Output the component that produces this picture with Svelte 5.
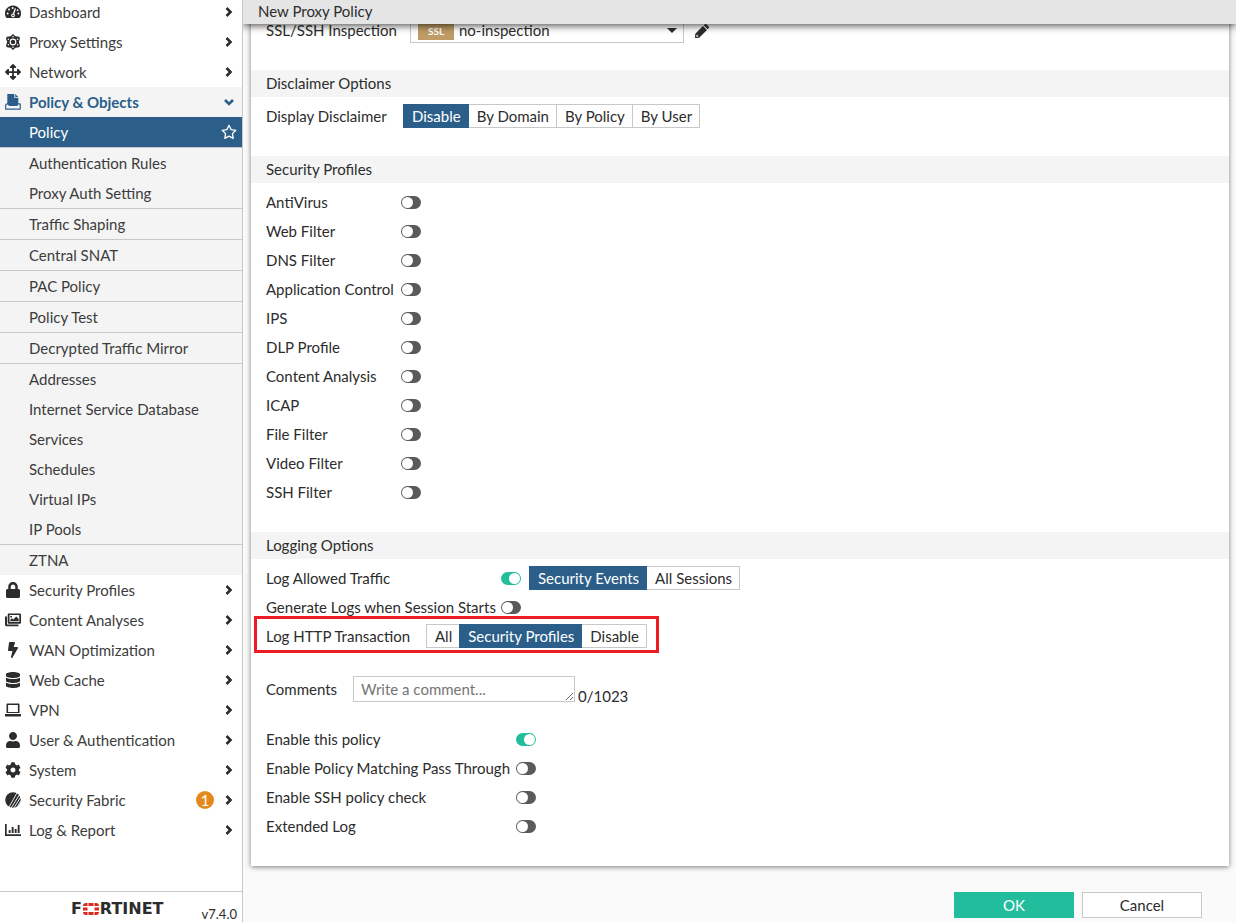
<script>
  const icons = {
    dashboard: {
      box: '0 0 16 16',
      body: '<path fill-rule="evenodd" d="M8 1.5a8 8 0 0 0-7.2 11.6c.3.6.7.9 1.3.9h11.8c.6 0 1-.3 1.3-.9A8 8 0 0 0 8 1.5z"/><g fill="#fff"><circle cx="2.6" cy="9.6" r="1"/><circle cx="4" cy="5.6" r="1"/><circle cx="7.6" cy="3.9" r="1"/><circle cx="13.4" cy="9.6" r="1"/><circle cx="12.6" cy="6.2" r=".9"/><path d="M9.8 4.2l1.2.4-1.8 5.3a1.9 1.9 0 1 1-1.3-.4z"/></g><circle cx="8" cy="11.4" r=".8"/>'
    },
    atom: {
      box: '0 0 16 16',
      body: '<path d="M8 0l2.400 2.300 3.800.5.800 1.600L13.800 8l1.200 3.600-.8 1.600-3.800.5L8 16l-2.400-2.300-3.800-.5-.8-1.600L2.200 8 1 4.400l.8-1.600 3.800-.5z"/><circle cx="8" cy="8" r="2.800" fill="none" stroke="#fff" stroke-width="1.200"/><g fill="#fff"><circle cx="8" cy="2.700" r=".8"/><circle cx="8" cy="13.300" r=".8"/><circle cx="3.400" cy="5.300" r=".8"/><circle cx="12.600" cy="5.300" r=".8"/><circle cx="3.400" cy="10.700" r=".8"/><circle cx="12.600" cy="10.700" r=".8"/></g>'
    },
    network: {
      box: '0 0 512 512',
      body: '<path d="M352.201 425.775l-79.196 79.196c-9.373 9.373-24.568 9.373-33.941 0l-79.196-79.196c-15.119-15.119-4.411-40.971 16.971-40.97h51.162L228 284H127.196v51.162c0 21.382-25.851 32.09-40.971 16.971L7.029 272.937c-9.373-9.373-9.373-24.569 0-33.941L86.225 159.8c15.119-15.119 40.971-4.411 40.971 16.971V228H228V127.196h-51.23c-21.382 0-32.09-25.851-16.971-40.971l79.196-79.196c9.373-9.373 24.568-9.373 33.941 0l79.196 79.196c15.119 15.119 4.411 40.971-16.971 40.971h-51.162V228h100.804v-51.162c0-21.382 25.851-32.09 40.97-16.971l79.196 79.196c9.373 9.373 9.373 24.569 0 33.941L425.773 352.2c-15.119 15.119-40.971 4.411-40.97-16.971V284H284v100.804h51.23c21.382 0 32.09 25.851 16.971 40.971z"/>'
    },
    policy: {
      box: '0 0 16 16',
      body: '<path d="M2.300 0h7v3.800h4v6l-1.400 1.500H4L2.300 9.500zM10.200 0l3.100 3h-3.100z"/><path fill="none" stroke="currentColor" stroke-width="1.200" stroke-linejoin="round" d="M2.600 9.600L.7 11v4.200h14.500V9.800h-2l-1.300 1.600H4.400z"/>'
    },
    lock: {
      box: '0 0 448 512',
      body: '<path d="M400 224h-24v-72C376 68.2 307.8 0 224 0S72 68.2 72 152v72H48c-26.5 0-48 21.5-48 48v192c0 26.5 21.5 48 48 48h352c26.5 0 48-21.5 48-48V272c0-26.5-21.5-48-48-48zm-104 0H152v-72c0-39.7 32.3-72 72-72s72 32.3 72 72v72z"/>'
    },
    images: {
      box: '0 0 16 16',
      body: '<path d="M0 4.5h2v8h11.5v1.7H1.4C.5 14.200 0 13.600 0 12.800z"/><path fill-rule="evenodd" d="M4 1.500h10.700c.8 0 1.300.5 1.300 1.300v7.600c0 .8-.5 1.300-1.300 1.300H4c-.8 0-1.300-.5-1.300-1.300V2.800C2.700 2 3.200 1.500 4 1.500zm.5 1.600v6.900h9.800V3.100zM5.300 9.200V7.700l1.600-1.500 1.300 1.200 3-3 2.500 2.500v2.300zM5.300 3.900h1.700v1.500H5.300z"/>'
    },
    bolt: {
      box: '0 0 320 512',
      body: '<path d="M296 160H180.600l42.600-129.800C227.200 15 215.700 0 200 0H56C44 0 33.800 8.900 32.200 20.800l-32 240C-1.700 275.200 9.500 288 24 288h118.700L96.600 482.500c-3.600 15.200 8 29.500 23.300 29.500 8.400 0 16.400-4.400 20.800-12l176-304c9.300-15.900-2.200-36-20.700-36z"/>'
    },
    database: {
      box: '0 0 448 512',
      body: '<path d="M448 73.143v45.714C448 159.143 347.667 192 224 192S0 159.143 0 118.857V73.143C0 32.857 100.333 0 224 0s224 32.857 224 73.143zM448 176v102.857C448 319.143 347.667 352 224 352S0 319.143 0 278.857V176c48.125 33.143 136.208 48.572 224 48.572S399.874 209.143 448 176zm0 160v102.857C448 479.143 347.667 512 224 512S0 479.143 0 438.857V336c48.125 33.143 136.208 48.572 224 48.572S399.874 369.143 448 336z"/>'
    },
    laptop: {
      box: '0 0 16 16',
      body: '<path fill-rule="evenodd" d="M2.500 1.500h11c.6 0 1 .4 1 1V11h-13V2.500c0-.6.4-1 1-1zM3.100 3.100v6.800h9.800V3.100zM0 12h16v1.500c0 .6-.4 1-1 1H1c-.6 0-1-.4-1-1z"/>'
    },
    user: {
      box: '0 0 448 512',
      body: '<path d="M224 256c70.700 0 128-57.300 128-128S294.700 0 224 0 96 57.300 96 128s57.300 128 128 128zm89.600 32h-16.700c-22.200 10.200-46.900 16-72.900 16s-50.600-5.800-72.900-16h-16.700C60.200 288 0 348.200 0 422.400V464c0 26.500 21.500 48 48 48h352c26.500 0 48-21.500 48-48v-41.600c0-74.200-60.200-134.400-134.400-134.400z"/>'
    },
    cog: {
      box: '0 0 512 512',
      body: '<path d="M487.400 315.700l-42.600-24.600c4.300-23.200 4.300-47 0-70.200l42.600-24.600c4.900-2.800 7.100-8.600 5.500-14-11.100-35.600-30-67.800-54.700-94.600-3.800-4.100-10-5.100-14.800-2.300L380.800 110c-17.900-15.400-38.500-27.300-60.800-35.100V25.800c0-5.600-3.900-10.500-9.400-11.700-36.700-8.200-74.300-7.800-109.200 0-5.500 1.200-9.400 6.100-9.400 11.700V75c-22.200 7.900-42.800 19.800-60.800 35.100L88.700 85.500c-4.900-2.800-11-1.900-14.800 2.300-24.700 26.700-43.600 58.900-54.700 94.600-1.700 5.400.6 11.200 5.500 14L67.300 221c-4.300 23.200-4.300 47 0 70.200l-42.600 24.600c-4.900 2.800-7.100 8.600-5.500 14 11.100 35.600 30 67.800 54.700 94.600 3.800 4.100 10 5.100 14.800 2.300l42.600-24.600c17.900 15.400 38.500 27.300 60.800 35.100v49.200c0 5.600 3.900 10.500 9.400 11.700 36.700 8.200 74.300 7.800 109.200 0 5.500-1.200 9.400-6.100 9.400-11.700v-49.200c22.200-7.900 42.800-19.800 60.800-35.100l42.600 24.600c4.900 2.800 11 1.900 14.800-2.300 24.700-26.700 43.600-58.900 54.700-94.600 1.500-5.500-.7-11.300-5.600-14.100zM256 336c-44.100 0-80-35.900-80-80s35.900-80 80-80 80 35.900 80 80-35.900 80-80 80z"/>'
    },
    fabric: {
      box: '0 0 16 16',
      body: '<circle cx="8" cy="8" r="7.800"/><g stroke="#fff" stroke-width=".9"><path d="M3.500 16L12.500 0M6.200 16L14.800 2M8.900 16L16 4.500M11.600 16L16 8.500"/></g>'
    },
    chart: {
      box: '0 0 16 16',
      body: '<path d="M0 2h1.700v10.300H16V14H0zM3.700 8h1.900v3H3.700zM6.700 5h1.900v6H6.700zM9.700 7h1.900v4H9.700zM12.700 3h1.900v8h-1.900z"/>'
    }
  };

  const topMenu = [
    { label: 'Dashboard', icon: 'dashboard' },
    { label: 'Proxy Settings', icon: 'atom' },
    { label: 'Network', icon: 'network' }
  ];

  // Each group is closed off by a divider line
  const policyGroups = [
    ['Authentication Rules', 'Proxy Auth Setting'],
    ['Traffic Shaping'],
    ['Central SNAT'],
    ['PAC Policy'],
    ['Policy Test'],
    ['Decrypted Traffic Mirror'],
    ['Addresses', 'Internet Service Database', 'Services', 'Schedules', 'Virtual IPs', 'IP Pools'],
    ['ZTNA']
  ];

  const bottomMenu = [
    { label: 'Security Profiles', icon: 'lock' },
    { label: 'Content Analyses', icon: 'images' },
    { label: 'WAN Optimization', icon: 'bolt' },
    { label: 'Web Cache', icon: 'database' },
    { label: 'VPN', icon: 'laptop' },
    { label: 'User & Authentication', icon: 'user' },
    { label: 'System', icon: 'cog' },
    { label: 'Security Fabric', icon: 'fabric', badge: 1 },
    { label: 'Log & Report', icon: 'chart' }
  ];

  let inspection = $state('no-inspection');
  let disclaimer = $state('Disable');
  let logTraffic = $state(true);
  let logTrafficMode = $state('Security Events');
  let logSessionStart = $state(false);
  let logHttp = $state('Security Profiles');
  let comment = $state('');

  let profiles = $state(
    [
      'AntiVirus',
      'Web Filter',
      'DNS Filter',
      'Application Control',
      'IPS',
      'DLP Profile',
      'Content Analysis',
      'ICAP',
      'File Filter',
      'Video Filter',
      'SSH Filter'
    ].map((name) => ({ name, enabled: false }))
  );

  let policyOptions = $state([
    { name: 'Enable this policy', enabled: true },
    { name: 'Enable Policy Matching Pass Through', enabled: false },
    { name: 'Enable SSH policy check', enabled: false },
    { name: 'Extended Log', enabled: false }
  ]);
</script>

{#snippet icon(name)}
  <span class="icon">
    <svg viewBox={icons[name].box} aria-hidden="true">{@html icons[name].body}</svg>
  </span>
{/snippet}

{#snippet menuItem(item)}
  <a class="item" href="#top">
    {@render icon(item.icon)}
    <span class="item-label">{item.label}</span>
    {#if item.badge}
      <span class="badge">{item.badge}</span>
    {/if}
    <svg class="chevron" viewBox="0 0 10 10" aria-hidden="true"><path d="M2.500 1L6.500 5l-4 4" /></svg>
  </a>
{/snippet}

{#snippet segments(name, options, value, onselect)}
  <div class="segments" role="radiogroup" aria-label={name}>
    {#each options as option}
      <label class="segment" class:active={option === value}>
        <input type="radio" {name} checked={option === value} onchange={() => onselect(option)} />
        {option}
      </label>
    {/each}
  </div>
{/snippet}

<div class="app">
  <aside class="sidebar">
    <nav>
      {#each topMenu as item}
        {@render menuItem(item)}
      {/each}

      <a class="item open" href="#top">
        {@render icon('policy')}
        <span class="item-label">Policy &amp; Objects</span>
        <svg class="chevron" viewBox="0 0 10 10" aria-hidden="true"><path d="M1 3l4 4 4-4" /></svg>
      </a>
      <a class="item sub current" href="#top">
        <span class="item-label">Policy</span>
        <svg class="star" viewBox="0 0 16 16" aria-hidden="true">
          <path d="M8 1.300l2.100 4.300 4.700.7-3.400 3.300.8 4.700L8 12.100l-4.200 2.200.8-4.700L1.200 6.300l4.700-.7z" />
        </svg>
      </a>
      {#each policyGroups as group}
        <div class="group">
          {#each group as label}
            <a class="item sub" href="#top"><span class="item-label">{label}</span></a>
          {/each}
        </div>
      {/each}

      {#each bottomMenu as item}
        {@render menuItem(item)}
      {/each}
    </nav>

    <div class="brand">
      <span class="logo" role="img" aria-label="Fortinet">
        <span>F</span>
        <svg viewBox="0 0 16 12" aria-hidden="true">
          <path d="M5.500 0h5v3h-5zM5.500 9h5v3h-5zM0 4.500h4.500v3H0zM11.500 4.500H16v3h-4.500zM3 0h1.500v3H0C0 1.200 1.200 0 3 0zM13 0h-1.500v3H16c0-1.800-1.200-3-3-3zM3 12h1.500V9H0c0 1.800 1.200 3 3 3zM13 12h-1.500V9H16c0 1.800-1.200 3-3 3z" />
        </svg>
        <span>RTINET</span>
      </span>
      <span class="version">v7.4.0</span>
    </div>
  </aside>

  <main>
    <h1 class="title">New Proxy Policy</h1>

    <div class="scroll">
      <form class="panel" id="policy-form">
        <section>
          <div class="row">
            <label class="name w-inspection" for="inspection">SSL/SSH Inspection</label>
            <div class="select">
              <span class="ssl">SSL</span>
              <select id="inspection" bind:value={inspection}>
                <option>no-inspection</option>
              </select>
              <svg class="caret" viewBox="0 0 10 5" aria-hidden="true"><path d="M0 0h10L5 5z" /></svg>
            </div>
            <button type="button" class="edit" aria-label="Edit">
              <svg viewBox="0 0 14 14" aria-hidden="true">
                <path fill-rule="evenodd" d="M7.900 2l4.100 4.100-7.800 7.600L.4 14c-.3 0-.4-.1-.4-.4l.3-3.800zM8.800 1.200L9.700.4c.5-.5 1.300-.5 1.800 0L13.600 2.500c.5.5.5 1.300 0 1.800l-.8.9zM1.600 10.800l-.3 1.900 1.900-.3v-.9h-.8v-.8z" />
              </svg>
            </button>
          </div>
        </section>

        <section>
          <h2>Disclaimer Options</h2>
          <div class="row">
            <span class="name w-disclaimer">Display Disclaimer</span>
            {@render segments(
              'Display Disclaimer',
              ['Disable', 'By Domain', 'By Policy', 'By User'],
              disclaimer,
              (v) => (disclaimer = v)
            )}
          </div>
        </section>

        <section>
          <h2>Security Profiles</h2>
          {#each profiles as profile, i}
            <div class="row">
              <label class="name w-profile" for="profile-{i}">{profile.name}</label>
              <input class="switch" type="checkbox" id="profile-{i}" bind:checked={profile.enabled} />
            </div>
          {/each}
        </section>

        <section>
          <h2>Logging Options</h2>
          <div class="row">
            <label class="name w-log" for="log-traffic">Log Allowed Traffic</label>
            <input class="switch" type="checkbox" id="log-traffic" bind:checked={logTraffic} />
            <div class="after-switch">
              {@render segments(
                'Log Allowed Traffic',
                ['Security Events', 'All Sessions'],
                logTrafficMode,
                (v) => (logTrafficMode = v)
              )}
            </div>
          </div>
          <div class="row">
            <label class="name w-log" for="log-start">Generate Logs when Session Starts</label>
            <input class="switch" type="checkbox" id="log-start" bind:checked={logSessionStart} />
          </div>
          <div class="row highlight">
            <span class="name w-http">Log HTTP Transaction</span>
            {@render segments(
              'Log HTTP Transaction',
              ['All', 'Security Profiles', 'Disable'],
              logHttp,
              (v) => (logHttp = v)
            )}
          </div>
        </section>

        <div class="comments">
          <label class="name w-comments" for="comments">Comments</label>
          <textarea id="comments" rows="1" maxlength="1023" placeholder="Write a comment..." bind:value={comment}></textarea>
          <span class="counter">{comment.length}/1023</span>
        </div>

        <section>
          {#each policyOptions as option, i}
            <div class="row">
              <label class="name w-option" for="option-{i}">{option.name}</label>
              <input class="switch" type="checkbox" id="option-{i}" bind:checked={option.enabled} />
            </div>
          {/each}
        </section>
      </form>
    </div>

    <footer>
      <button type="submit" form="policy-form" class="ok">OK</button>
      <button type="button" class="cancel">Cancel</button>
    </footer>
  </main>
</div>

<style>
  :global(body) {
    margin: 0;
  }

  .app {
    display: flex;
    height: 100vh;
    overflow: hidden;
    background: #fafafa;
    color: #2c2c2c;
    font-family: Lato, sans-serif;
    font-size: 15px;
    line-height: 20px;
  }

  .app *,
  .app *::before,
  .app *::after {
    box-sizing: border-box;
  }

  /* Sidebar */
  .sidebar {
    display: flex;
    flex-direction: column;
    flex: 0 0 243px;
    background: #fff;
    border-right: 1px solid #c8c8c8;
  }

  /* The menu is scrolled down a little */
  nav {
    flex: 1;
    min-height: 0;
    margin-top: -3px;
    overflow: hidden;
  }

  .item {
    display: flex;
    align-items: center;
    height: 30px;
    padding: 0 8px 0 5px;
    color: #3c3c3c;
    text-decoration: none;
  }

  .item-label {
    flex: 1;
  }

  .icon {
    display: flex;
    justify-content: center;
    width: 16px;
    margin-right: 8px;
    color: #2c2c2c;
  }

  .icon svg {
    height: 16px;
    fill: currentColor;
  }

  .chevron {
    width: 10px;
    height: 10px;
    fill: none;
    stroke: #2c2c2c;
    stroke-width: 2.6;
  }

  .badge {
    width: 18px;
    height: 18px;
    margin-right: 10px;
    border-radius: 50%;
    background: #e38a1e;
    color: #fff;
    line-height: 18px;
    text-align: center;
  }

  .open {
    background: #f4f4f4;
    color: #2b5f8a;
    font-weight: bold;
  }

  .open .icon {
    color: #2b5f8a;
  }

  .open .chevron {
    stroke: #2b5f8a;
  }

  .sub {
    padding: 0 5px 0 29px;
  }

  .current {
    background: #2b5f8a;
    color: #fff;
  }

  .star {
    width: 16px;
    height: 16px;
    fill: none;
    stroke: #fff;
    stroke-width: 1.3;
    stroke-linejoin: round;
  }

  .group {
    border-top: 1px solid #c8c8c8;
    background: #f4f4f4;
  }

  .brand {
    display: flex;
    align-items: center;
    justify-content: flex-end;
    height: 31px;
    padding: 4px 5px 0 0;
    border-top: 1px solid #c8c8c8;
  }

  .logo {
    display: flex;
    align-items: center;
    gap: 1px;
    margin-right: 38px;
    color: #2c2c2c;
    font-family: 'DejaVu Sans', sans-serif;
    font-size: 16px;
    font-weight: bold;
  }

  .logo svg {
    width: 16px;
    height: 12px;
    fill: #da291c;
  }

  .version {
    align-self: flex-end;
    font-size: 13px;
    line-height: 16px;
  }

  /* Main column */
  main {
    display: flex;
    flex-direction: column;
    flex: 1;
    min-width: 0;
  }

  .title {
    position: relative;
    z-index: 1;
    margin: 0;
    padding: 1px 15px 3px;
    background: #e5e5e5;
    box-shadow: 0 1px 8px rgba(0, 0, 0, 0.8);
    clip-path: inset(0 0 -12px 0);
    font-size: 15px;
    font-weight: normal;
    line-height: 20px;
  }

  .scroll {
    flex: 1;
    min-height: 0;
    overflow: hidden;
  }

  .panel {
    margin: -8px 7px 0 8px;
    background: #fff;
    box-shadow: 0 1px 5px rgba(0, 0, 0, 0.5);
  }

  section {
    padding-bottom: 25px;
  }

  h2 {
    margin: 0 0 5px;
    padding: 3px 15px 4px;
    background: #f4f4f4;
    font-size: 15px;
    font-weight: normal;
    line-height: 20px;
  }

  .row {
    display: flex;
    align-items: center;
    height: 29px;
    padding-left: 15px;
  }

  .name {
    flex: none;
    padding-bottom: 1px;
    white-space: nowrap;
  }

  .w-comments {
    width: 87px;
  }

  .w-profile {
    width: 135px;
  }

  .w-disclaimer {
    width: 137px;
  }

  .w-inspection {
    width: 144px;
  }

  .w-http {
    width: 160px;
  }

  .w-log {
    width: 235px;
  }

  .w-option {
    width: 250px;
  }

  .select {
    position: relative;
    width: 274px;
    padding-bottom: 1px;
  }

  select {
    display: block;
    width: 100%;
    height: 26px;
    padding: 0 24px 0 48px;
    border: 1px solid #c8c8c8;
    border-radius: 0;
    appearance: none;
    background: #fff;
    color: inherit;
    font: inherit;
  }

  .ssl {
    position: absolute;
    top: 4px;
    left: 8px;
    width: 36px;
    height: 19px;
    background: #bf9c65;
    color: #fff;
    font-size: 10px;
    font-weight: bold;
    line-height: 20px;
    text-align: center;
  }

  .caret {
    position: absolute;
    top: 11px;
    right: 7px;
    width: 10px;
    height: 5px;
    fill: #2c2c2c;
    pointer-events: none;
  }

  .edit {
    display: flex;
    margin-left: 11px;
    padding: 0;
    border: 0;
    background: none;
    cursor: pointer;
  }

  .edit svg {
    width: 14px;
    height: 14px;
    fill: #2c2c2c;
  }

  .segments {
    display: flex;
    padding-bottom: 1px;
  }

  .segment {
    position: relative;
    height: 24px;
    padding: 0 7px 0 8px;
    border: 1px solid #c8c8c8;
    background: #fff;
    line-height: 23px;
    white-space: nowrap;
    cursor: pointer;
  }

  .segment + .segment {
    margin-left: -1px;
  }

  .segment input {
    position: absolute;
    inset: 0;
    margin: 0;
    opacity: 0;
    cursor: pointer;
  }

  .segment.active {
    z-index: 1;
    border-color: #2b5f8a;
    background: #2b5f8a;
    color: #fff;
  }

  .switch {
    position: relative;
    width: 20px;
    height: 13px;
    margin: 0;
    border-radius: 7px;
    appearance: none;
    background: #5a5a5a;
    cursor: pointer;
  }

  .switch::before {
    content: '';
    position: absolute;
    top: 1px;
    left: 1px;
    width: 11px;
    height: 11px;
    border-radius: 50%;
    background: #fff;
  }

  .switch:checked {
    background: #21bd9d;
  }

  .switch:checked::before {
    left: 8px;
  }

  .after-switch {
    margin-left: 8px;
  }

  .highlight {
    position: relative;
    width: fit-content;
  }

  .highlight::after {
    content: '';
    position: absolute;
    inset: -6px -12px -2px 3px;
    border: 3px solid #ed1c24;
    pointer-events: none;
  }

  .comments {
    display: flex;
    align-items: center;
    padding: 0 15px 23px;
  }

  textarea {
    width: 222px;
    height: 26px;
    padding: 2px 7px;
    border: 1px solid #c8c8c8;
    background: #fff;
    color: inherit;
    font: inherit;
    overflow: hidden;
  }

  textarea::placeholder {
    color: #757575;
  }

  .counter {
    align-self: flex-end;
    margin: 0 0 -4px 3px;
  }

  footer {
    display: flex;
    justify-content: flex-end;
    gap: 8px;
    padding: 0 34px 4px;
  }

  footer button {
    width: 120px;
    height: 26px;
    border: 1px solid #c8c8c8;
    background: #fff;
    color: inherit;
    font: inherit;
    cursor: pointer;
  }

  footer .ok {
    border-color: #21bd9d;
    background: #21bd9d;
    color: #fff;
  }
</style>
